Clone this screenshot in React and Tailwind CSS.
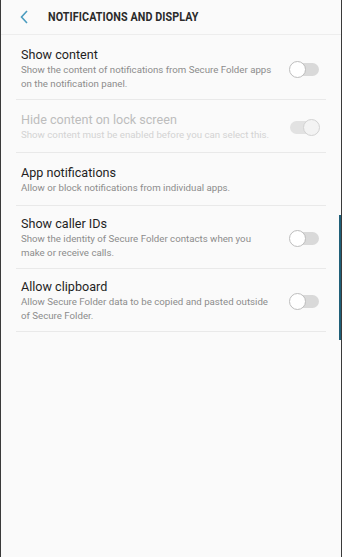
import React from 'react';

const rows = [
  {
    title: 'Show content',
    sub: 'Show the content of notifications from Secure Folder apps on the notification panel.',
    toggle: 'off',
    first: true,
  },
  {
    title: 'Hide content on lock screen',
    sub: 'Show content must be enabled before you can select this.',
    toggle: 'disabled',
    disabled: true,
  },
  {
    title: 'App notifications',
    sub: 'Allow or block notifications from individual apps.',
  },
  {
    title: 'Show caller IDs',
    sub: 'Show the identity of Secure Folder contacts when you make or receive calls.',
    toggle: 'off',
  },
  {
    title: 'Allow clipboard',
    sub: 'Allow Secure Folder data to be copied and pasted outside of Secure Folder.',
    toggle: 'off',
  },
];

const Toggle = ({ state }) => {
  if (state === 'disabled') {
    return (
      <div className="relative w-[31px] h-[17px] flex items-center">
        <div className="w-[29px] h-[13px] ml-[1px] rounded-full bg-[#e2e2e2]" />
        <div className="absolute right-0 top-0 w-[17px] h-[17px] rounded-full bg-[#f3f3f3] border border-[#d2d2d2]" />
      </div>
    );
  }
  return (
    <div className="relative w-[31px] h-[17px] flex items-center">
      <div className="w-[29px] h-[13px] ml-[1px] rounded-full bg-[#d9d9d9]" />
      <div className="absolute left-0 top-0 w-[17px] h-[17px] rounded-full bg-white border border-[#bdbdbd]" />
    </div>
  );
};

export default function App() {
  return (
    <div className="relative w-[342px] h-[557px] bg-[#fafafa] border-x border-[#3a3a3a] font-['Roboto',sans-serif] overflow-hidden">
      <header className="h-[35px] flex items-center border-b border-[#ededed] bg-[#fafafa]">
        <svg width="10" height="14" viewBox="0 0 10 14" className="ml-[18px]">
          <path d="M8 1 L2.5 7 L8 13" fill="none" stroke="#4b9cbf" strokeWidth="1.6" />
        </svg>
        <h1 className="ml-[19px] text-[12.5px] font-bold text-[#2b2b2b] tracking-[0.1px] scale-x-[0.86] origin-left whitespace-nowrap">
          NOTIFICATIONS AND DISPLAY
        </h1>
      </header>

      <div className="px-[15px]">
        {rows.map((r) => (
          <div
            key={r.title}
            className={`flex items-center min-h-[53px] ${r.first ? 'pt-[12px]' : 'pt-[10px]'} pb-[8px] border-b border-[#e9e9e9]`}
          >
            <div className="flex-1 pl-[5px] pr-[14px]">
              <div
                className={`text-[12.6px] leading-[16px] ${r.disabled ? 'text-[#bdbdbd]' : 'text-[#1f1f1f]'}`}
              >
                {r.title}
              </div>
              <div
                className={`text-[9.7px] leading-[14px] ${r.disabled ? 'text-[#d3d3d3]' : 'text-[#8c8c8c]'}`}
              >
                {r.sub}
              </div>
            </div>
            {r.toggle ? (
              <div className="w-[37px] flex justify-start">
                <Toggle state={r.toggle} />
              </div>
            ) : (
              <div className="w-[37px]" />
            )}
          </div>
        ))}
      </div>

      <div className="absolute right-0 top-[215px] w-[2px] h-[125px] bg-[#1f5f78]" />
    </div>
  );
}
